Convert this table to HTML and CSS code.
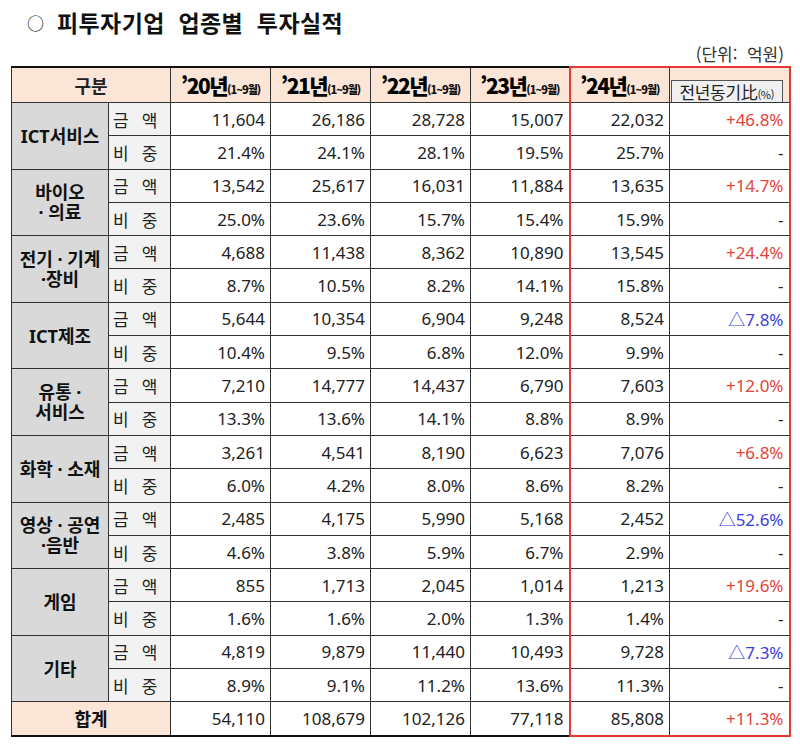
FILE: index.html
```html
<!DOCTYPE html>
<html lang="ko">
<head>
<meta charset="utf-8">
<link rel="stylesheet" href="styles.css">
</head>
<body>
<div class="page">
  <h1 class="title"><span class="bullet">○</span><span>피투자기업&nbsp; 업종별&nbsp; 투자실적</span></h1>
  <div class="unit">(단위:&nbsp; 억원)</div>
  <table class="tbl">
    <colgroup>
      <col class="c-cat"><col class="c-sub"><col class="c-yr"><col class="c-yr"><col class="c-yr"><col class="c-yr23"><col class="c-yr"><col class="c-yoy">
    </colgroup>
    <thead>
      <tr class="head">
        <th colspan="2" class="h-cat">구분</th>
        <th class="h-yr"><span class="yr">’20년</span><span class="mo">(1~9월)</span></th>
        <th class="h-yr"><span class="yr">’21년</span><span class="mo">(1~9월)</span></th>
        <th class="h-yr"><span class="yr">’22년</span><span class="mo">(1~9월)</span></th>
        <th class="h-yr"><span class="yr">’23년</span><span class="mo">(1~9월)</span></th>
        <th class="h-yr hl-l hl-t"><span class="yr">’24년</span><span class="mo">(1~9월)</span></th>
        <th class="h-yoy hl-r hl-t"><div class="yoy-box">전년동기比<span class="pct">(%)</span></div></th>
      </tr>
    </thead>
    <tbody>
      <tr><td rowspan="2" class="cat">ICT서비스</td><td class="sub">금<span class="sp"></span>액</td><td>11,604</td><td>26,186</td><td>28,728</td><td>15,007</td><td class="hl-l">22,032</td><td class="hl-r up">+46.8%</td></tr>
      <tr><td class="sub">비<span class="sp"></span>중</td><td>21.4%</td><td>24.1%</td><td>28.1%</td><td>19.5%</td><td class="hl-l">25.7%</td><td class="hl-r">-</td></tr>

      <tr><td rowspan="2" class="cat"><div class="two"><div>바이오</div><div>· 의료</div></div></td><td class="sub">금<span class="sp"></span>액</td><td>13,542</td><td>25,617</td><td>16,031</td><td>11,884</td><td class="hl-l">13,635</td><td class="hl-r up">+14.7%</td></tr>
      <tr><td class="sub">비<span class="sp"></span>중</td><td>25.0%</td><td>23.6%</td><td>15.7%</td><td>15.4%</td><td class="hl-l">15.9%</td><td class="hl-r">-</td></tr>

      <tr><td rowspan="2" class="cat"><div class="two"><div>전기 · 기계</div><div>·장비</div></div></td><td class="sub">금<span class="sp"></span>액</td><td>4,688</td><td>11,438</td><td>8,362</td><td>10,890</td><td class="hl-l">13,545</td><td class="hl-r up">+24.4%</td></tr>
      <tr><td class="sub">비<span class="sp"></span>중</td><td>8.7%</td><td>10.5%</td><td>8.2%</td><td>14.1%</td><td class="hl-l">15.8%</td><td class="hl-r">-</td></tr>

      <tr><td rowspan="2" class="cat">ICT제조</td><td class="sub">금<span class="sp"></span>액</td><td>5,644</td><td>10,354</td><td>6,904</td><td>9,248</td><td class="hl-l">8,524</td><td class="hl-r down">△7.8%</td></tr>
      <tr><td class="sub">비<span class="sp"></span>중</td><td>10.4%</td><td>9.5%</td><td>6.8%</td><td>12.0%</td><td class="hl-l">9.9%</td><td class="hl-r">-</td></tr>

      <tr><td rowspan="2" class="cat"><div class="two"><div>유통 ·</div><div>서비스</div></div></td><td class="sub">금<span class="sp"></span>액</td><td>7,210</td><td>14,777</td><td>14,437</td><td>6,790</td><td class="hl-l">7,603</td><td class="hl-r up">+12.0%</td></tr>
      <tr><td class="sub">비<span class="sp"></span>중</td><td>13.3%</td><td>13.6%</td><td>14.1%</td><td>8.8%</td><td class="hl-l">8.9%</td><td class="hl-r">-</td></tr>

      <tr><td rowspan="2" class="cat">화학 · 소재</td><td class="sub">금<span class="sp"></span>액</td><td>3,261</td><td>4,541</td><td>8,190</td><td>6,623</td><td class="hl-l">7,076</td><td class="hl-r up">+6.8%</td></tr>
      <tr><td class="sub">비<span class="sp"></span>중</td><td>6.0%</td><td>4.2%</td><td>8.0%</td><td>8.6%</td><td class="hl-l">8.2%</td><td class="hl-r">-</td></tr>

      <tr><td rowspan="2" class="cat"><div class="two"><div>영상 · 공연</div><div>·음반</div></div></td><td class="sub">금<span class="sp"></span>액</td><td>2,485</td><td>4,175</td><td>5,990</td><td>5,168</td><td class="hl-l">2,452</td><td class="hl-r down">△52.6%</td></tr>
      <tr><td class="sub">비<span class="sp"></span>중</td><td>4.6%</td><td>3.8%</td><td>5.9%</td><td>6.7%</td><td class="hl-l">2.9%</td><td class="hl-r">-</td></tr>

      <tr><td rowspan="2" class="cat">게임</td><td class="sub">금<span class="sp"></span>액</td><td>855</td><td>1,713</td><td>2,045</td><td>1,014</td><td class="hl-l">1,213</td><td class="hl-r up">+19.6%</td></tr>
      <tr><td class="sub">비<span class="sp"></span>중</td><td>1.6%</td><td>1.6%</td><td>2.0%</td><td>1.3%</td><td class="hl-l">1.4%</td><td class="hl-r">-</td></tr>

      <tr><td rowspan="2" class="cat">기타</td><td class="sub">금<span class="sp"></span>액</td><td>4,819</td><td>9,879</td><td>11,440</td><td>10,493</td><td class="hl-l">9,728</td><td class="hl-r down">△7.3%</td></tr>
      <tr><td class="sub">비<span class="sp"></span>중</td><td>8.9%</td><td>9.1%</td><td>11.2%</td><td>13.6%</td><td class="hl-l">11.3%</td><td class="hl-r">-</td></tr>

      <tr class="total"><td colspan="2" class="tot-label">합계</td><td>54,110</td><td>108,679</td><td>102,126</td><td>77,118</td><td class="hl-l hl-b">85,808</td><td class="hl-r hl-b up">+11.3%</td></tr>
    </tbody>
  </table>
</div>
</body>
</html>
```

FILE: styles.css
```css
html, body {
  margin: 0;
  padding: 0;
  background: #ffffff;
}

body {
  font-family: "Noto Sans", "Noto Sans CJK KR", sans-serif;
  color: #222222;
}

.page {
  width: 778px;
  padding: 0 11px;
}

.title {
  margin: 0;
  height: 44px;
  display: flex;
  align-items: center;
  font-family: "Noto Sans CJK KR", sans-serif;
  font-size: 23px;
  font-weight: 700;
  color: #111111;
  letter-spacing: 0.4px;
}

.bullet {
  font-weight: 400;
  font-size: 17px;
  margin-left: 16px;
  width: 30px;
}

.unit {
  height: 22px;
  text-align: right;
  padding-right: 5px;
  font-family: "Noto Sans CJK KR", sans-serif;
  font-size: 17px;
  line-height: 20px;
  color: #333333;
}

.tbl {
  width: 778px;
  border-collapse: collapse;
  table-layout: fixed;
  border-top: 2px solid #111111;
  border-bottom: 2px solid #111111;
}

.c-cat { width: 97px; }
.c-sub { width: 62px; }
.c-yr { width: 100px; }
.c-yr23 { width: 99px; }
.c-yoy { width: 120px; }

.tbl th,
.tbl td {
  border: 1px solid #333333;
  padding: 0;
}

.tbl tbody td {
  height: 32.3px;
  font-size: 17px;
  text-align: right;
  padding-right: 5px;
  white-space: nowrap;
}

.head th {
  height: 34px;
  background: #fbe5d6;
  font-family: "Noto Sans CJK KR", sans-serif;
  vertical-align: middle;
}

.h-cat {
  font-size: 18px;
  font-weight: 700;
}

.h-yr {
  white-space: nowrap;
}

.yr {
  font-size: 21px;
  font-weight: 900;
  letter-spacing: -1.5px;
  color: #000000;
}

.mo {
  font-size: 11px;
  font-weight: 900;
  letter-spacing: -1px;
  color: #111111;
}

.h-yoy {
  vertical-align: bottom !important;
  padding: 0 !important;
}

.yoy-box {
  margin: 12px 6px 0 1px;
  height: 21px;
  background: #f0f0f0;
  border: 1px solid #555555;
  border-bottom: none;
  font-size: 17px;
  font-weight: 400;
  line-height: 21px;
  text-align: center;
  color: #222222;
  white-space: nowrap;
  letter-spacing: -0.3px;
}

.pct {
  font-size: 11px;
}

.tbl tbody td.cat {
  background: #d9d9d9;
  text-align: center;
  padding: 0;
  font-family: "Noto Sans", "Noto Sans CJK KR", sans-serif;
  font-size: 18px;
  font-weight: 700;
  line-height: 22px;
  color: #111111;
  white-space: nowrap;
}

.two {
  display: flex;
  flex-direction: column;
  align-items: center;
  line-height: 20px;
}

.tbl tbody td.sub {
  background: #f2f2f2;
  text-align: left;
  padding-left: 4px;
  padding-right: 0;
  font-family: "Noto Sans CJK KR", sans-serif;
  font-size: 17px;
  color: #222222;
}

.sp {
  display: inline-block;
  width: 13px;
}

.tbl tbody td.tot-label {
  background: #fbe5d6;
  text-align: center;
  padding: 0;
  font-family: "Noto Sans CJK KR", sans-serif;
  font-size: 18px;
  font-weight: 700;
  color: #111111;
}

.up { color: #e0443c; }
.down { color: #3a40d8; }

.tbl .hl-l { border-left: 2px solid #e53935; }
.tbl .hl-r { border-right: 2px solid #e53935; }
.tbl .hl-t { border-top: 2px solid #e53935; }
.tbl .hl-b { border-bottom: 2px solid #e53935; }
```
